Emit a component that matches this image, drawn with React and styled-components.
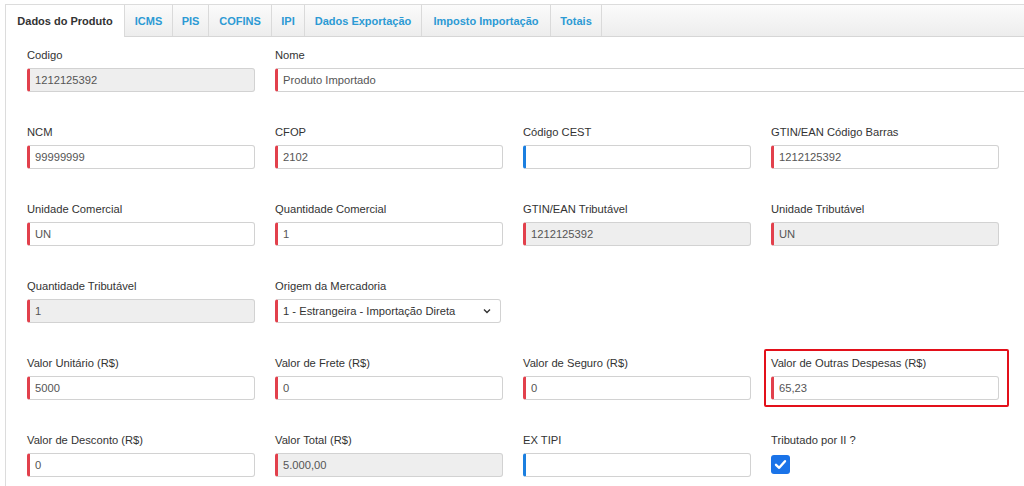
import React from 'react';
import styled, { createGlobalStyle } from 'styled-components';

const GlobalStyle = createGlobalStyle`
  body {
    margin: 0;
    background: #fff;
    font-family: "Liberation Sans", Arial, sans-serif;
    font-size: 11.2px;
    color: #333;
    overflow: hidden;
  }
`;

const tabs = [
  { name: 'Dados do Produto', width: 119 },
  { name: 'ICMS', width: 48 },
  { name: 'PIS', width: 36 },
  { name: 'COFINS', width: 63 },
  { name: 'IPI', width: 33 },
  { name: 'Dados Exportação', width: 117 },
  { name: 'Imposto Importação', width: 129 },
  { name: 'Totais', width: 51 },
];

const rows = [
  [
    { label: 'Codigo', value: '1212125392', disabled: true },
    { label: 'Nome', value: 'Produto Importado', wide: true },
  ],
  [
    { label: 'NCM', value: '99999999' },
    { label: 'CFOP', value: '2102' },
    { label: 'Código CEST', value: '', optional: true },
    { label: 'GTIN/EAN Código Barras', value: '1212125392' },
  ],
  [
    { label: 'Unidade Comercial', value: 'UN' },
    { label: 'Quantidade Comercial', value: '1' },
    { label: 'GTIN/EAN Tributável', value: '1212125392', disabled: true },
    { label: 'Unidade Tributável', value: 'UN', disabled: true },
  ],
  [
    { label: 'Quantidade Tributável', value: '1', disabled: true },
    { label: 'Origem da Mercadoria', value: '1 - Estrangeira - Importação Direta', select: true },
  ],
  [
    { label: 'Valor Unitário (R$)', value: '5000' },
    { label: 'Valor de Frete (R$)', value: '0' },
    { label: 'Valor de Seguro (R$)', value: '0' },
    { label: 'Valor de Outras Despesas (R$)', value: '65,23', highlighted: true },
  ],
  [
    { label: 'Valor de Desconto (R$)', value: '0' },
    { label: 'Valor Total (R$)', value: '5.000,00', disabled: true },
    { label: 'EX TIPI', value: '', optional: true },
    { label: 'Tributado por II ?', checkbox: true },
  ],
];

const Chevron = () => (
  <svg width="10" height="10" viewBox="0 0 10 10">
    <path d="M2 3.5 L5 6.5 L8 3.5" fill="none" stroke="#333" strokeWidth="1.4" />
  </svg>
);

const Check = () => (
  <svg width="13" height="13" viewBox="0 0 13 13">
    <path d="M2 6.8 L5.2 9.8 L11 3.2" fill="none" stroke="#fff" strokeWidth="2.4" strokeLinecap="round" strokeLinejoin="round" />
  </svg>
);

const FieldBox = ({ field }) => {
  if (field.checkbox) {
    return (
      <Field>
        <Label>{field.label}</Label>
        <CheckBox>
          <Check />
        </CheckBox>
      </Field>
    );
  }
  return (
    <Field wide={field.wide} highlighted={field.highlighted}>
      <Label>{field.label}</Label>
      {field.select ? (
        <Select>
          <span>{field.value}</span>
          <Chevron />
        </Select>
      ) : (
        <Input disabled={field.disabled} optional={field.optional}>
          {field.value}
        </Input>
      )}
    </Field>
  );
};

const App = () => {
  return (
    <>
      <GlobalStyle />
      <Panel>
        <TabBar>
          {tabs.map((tab, index) => (
            <Tab key={tab.name} active={index === 0} style={{ width: tab.width }}>
              {tab.name}
            </Tab>
          ))}
        </TabBar>
        <Body>
          {rows.map((row, index) => (
            <Row key={index}>
              {row.map((field) => (
                <FieldBox key={field.label} field={field} />
              ))}
            </Row>
          ))}
        </Body>
      </Panel>
    </>
  );
};

export default App;

const Panel = styled.div`
  margin: 4px 0 0 5px;
  border-left: 1px solid #dcdcdc;
  min-height: 482px;
`;

const TabBar = styled.div`
  display: flex;
  height: 31px;
  border-top: 1px solid #dcdcdc;
  border-bottom: 1px solid #d6d6d6;
  background: linear-gradient(#fbfbfb, #ededed);
`;

const Tab = styled.div`
  box-sizing: border-box;
  display: flex;
  align-items: center;
  justify-content: center;
  font-weight: bold;
  font-size: 11px;
  color: ${({ active }) => (active ? '#333' : '#2c9ad4')};
  background: ${({ active }) => (active ? '#fff' : 'transparent')};
  border-right: 1px solid #dadada;
  height: ${({ active }) => (active ? '32px' : '31px')};
`;

const Body = styled.div`
  padding: 10px 0 0 21px;
  display: flex;
  flex-direction: column;
  gap: 32px;
`;

const Row = styled.div`
  display: grid;
  grid-template-columns: repeat(4, 228px);
  column-gap: 20px;
`;

const Field = styled.div`
  position: relative;
  display: flex;
  flex-direction: column;
  grid-column: ${({ wide }) => (wide ? 'span 3' : 'auto')};
  width: ${({ wide }) => (wide ? '760px' : 'auto')};

  &::after {
    content: '';
    display: ${({ highlighted }) => (highlighted ? 'block' : 'none')};
    position: absolute;
    left: -7px;
    top: -6px;
    width: 241px;
    height: 54px;
    border: 2px solid #e3101a;
    border-radius: 2px;
  }
`;

const Label = styled.div`
  line-height: 16px;
  margin-bottom: 5px;
  color: #333;
`;

const Input = styled.div`
  box-sizing: border-box;
  height: 24px;
  display: flex;
  align-items: center;
  padding-left: 5px;
  border: 1px solid #d2d2d2;
  border-left: 3px solid ${({ optional }) => (optional ? '#1b7fe0' : '#e2404c')};
  border-radius: 3px;
  background: ${({ disabled }) => (disabled ? '#eeeeee' : '#fff')};
  color: #555;
`;

const Select = styled(Input)`
  width: 226px;
  justify-content: space-between;
  padding-right: 8px;
  color: #333;
`;

const CheckBox = styled.div`
  width: 19px;
  height: 19px;
  margin-top: 2px;
  border-radius: 3px;
  background: #1a73e8;
  display: flex;
  align-items: center;
  justify-content: center;
`;
